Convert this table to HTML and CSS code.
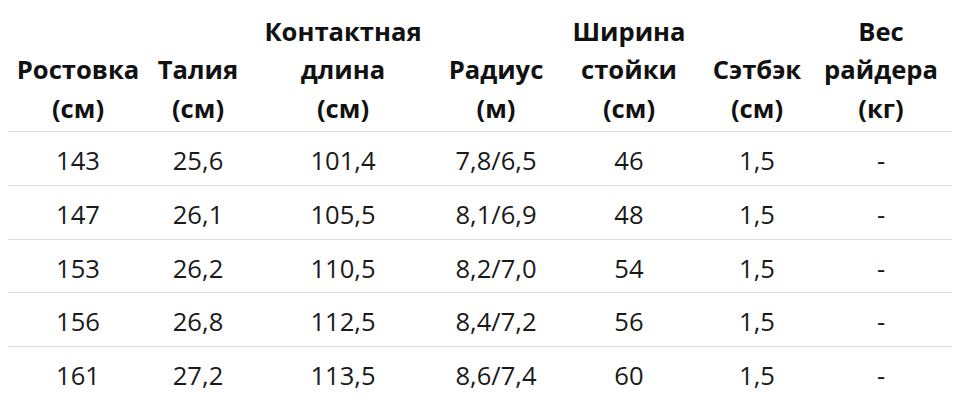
FILE: index.html
```html
<!DOCTYPE html>
<html lang="ru">
<head>
<meta charset="utf-8">
<link rel="stylesheet" href="styles.css">
</head>
<body>
<table class="sizes">
  <colgroup>
    <col class="c1"><col class="c2"><col class="c3"><col class="c4"><col class="c5"><col class="c6"><col class="c7">
  </colgroup>
  <thead>
    <tr>
      <th>Ростовка<br>(см)</th>
      <th>Талия<br>(см)</th>
      <th>Контактная<br>длина<br>(см)</th>
      <th>Радиус<br>(м)</th>
      <th>Ширина<br>стойки<br>(см)</th>
      <th>Сэтбэк<br>(см)</th>
      <th>Вес<br>райдера<br>(кг)</th>
    </tr>
  </thead>
  <tbody>
    <tr><td>143</td><td>25,6</td><td>101,4</td><td>7,8/6,5</td><td>46</td><td>1,5</td><td>-</td></tr>
    <tr><td>147</td><td>26,1</td><td>105,5</td><td>8,1/6,9</td><td>48</td><td>1,5</td><td>-</td></tr>
    <tr><td>153</td><td>26,2</td><td>110,5</td><td>8,2/7,0</td><td>54</td><td>1,5</td><td>-</td></tr>
    <tr><td>156</td><td>26,8</td><td>112,5</td><td>8,4/7,2</td><td>56</td><td>1,5</td><td>-</td></tr>
    <tr><td>161</td><td>27,2</td><td>113,5</td><td>8,6/7,4</td><td>60</td><td>1,5</td><td>-</td></tr>
  </tbody>
</table>
</body>
</html>
```
FILE: styles.css
```css
html, body {
  background: #ffffff;
}
body {
  margin: 8px;
  font-family: "Open Sans", "Noto Sans", sans-serif;
  color: #1a1a1a;
  overflow: hidden;
}
.sizes {
  width: 944px;
  table-layout: fixed;
  border-collapse: collapse;
  font-size: 25.6px;
  line-height: 38.4px;
}
.c1 { width: 140px; }
.c2 { width: 100px; }
.c3 { width: 190px; }
.c4 { width: 116px; }
.c5 { width: 150px; }
.c6 { width: 106px; }
.c7 { width: 142px; }
.sizes th {
  font-weight: 700;
  color: #111111;
  text-align: center;
  vertical-align: bottom;
  padding: 5px 0 3px;
  border-bottom: 1px solid #dedede;
}
.sizes td {
  text-align: center;
  padding: 10px 0 4.3px;
  border-bottom: 1px solid #dedede;
  font-weight: 400;
}
```
